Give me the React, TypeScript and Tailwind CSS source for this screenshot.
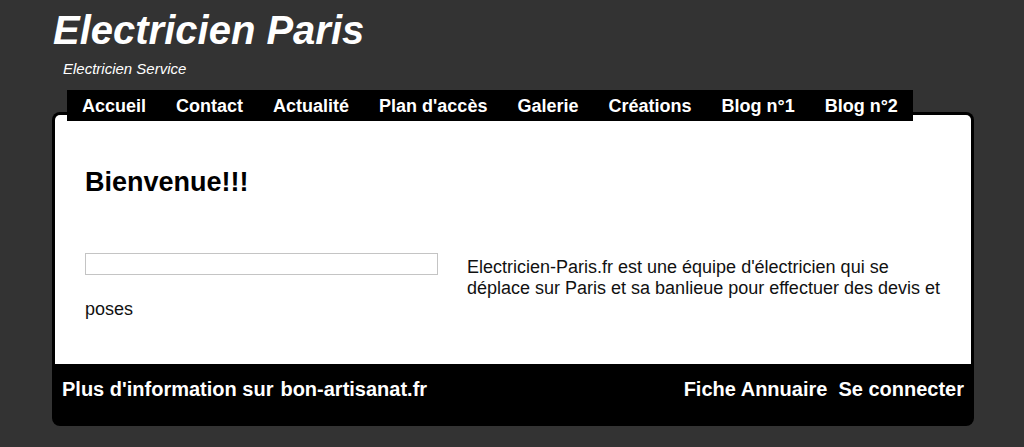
import React from "react";

const links = ["Accueil", "Contact", "Actualité", "Plan d'accès", "Galerie", "Créations", "Blog n°1", "Blog n°2"];

export default function App() {
  return (
    <div className="min-h-[447px] bg-[#333333] font-['Liberation_Sans',Arial,sans-serif]">
      <div className="w-[922px] ml-[52px] pt-[7px]">
        <h1 className="text-[40px] leading-[46px] font-bold italic text-white pl-[1px]">Electricien Paris</h1>
        <p className="mt-[7px] ml-[11px] text-[15px] leading-[17px] italic text-white">Electricien Service</p>

        <nav className="relative z-10 mt-[13px] ml-[15px] -mb-[9px] flex w-fit items-start bg-black h-[31px] pt-[6px]">
          {links.map((l, i) => (
            <a key={i} href="#" className="block px-[15px] text-[18px] leading-[21px] font-bold text-white">
              {l}
            </a>
          ))}
        </nav>

        <div className="bg-black rounded-[8px] p-[3px] pb-0">
          <div className="bg-white rounded-t-[5px] px-[30px] pt-[52px] pb-[44px] text-[#111]">
            <h2 className="text-[27px] leading-[31px] font-bold text-black">Bienvenue!!!</h2>
            <div className="mt-[59px] text-[18px] leading-[21px]">
              <div className="float-left -mt-[4px] h-[30px] w-[382px]">
                <input className="block w-[353px] h-[22px] border border-[#c4c4c4] bg-white" />
              </div>
              <p>
                Electricien-Paris.fr est une équipe d'électricien qui se déplace sur Paris et sa banlieue pour effectuer des devis et poses
              </p>
            </div>
          </div>
          <div className="flex justify-between h-[62px] px-[7px] pt-[14px] text-[20px] leading-[23px] font-bold text-white">
            <div className="flex gap-[7px]">
              <a href="#">Plus d'information sur</a>
              <a href="#">bon-artisanat.fr</a>
            </div>
            <div className="flex gap-[11px]">
              <a href="#">Fiche Annuaire</a>
              <a href="#">Se connecter</a>
            </div>
          </div>
        </div>
      </div>
    </div>
  );
}
